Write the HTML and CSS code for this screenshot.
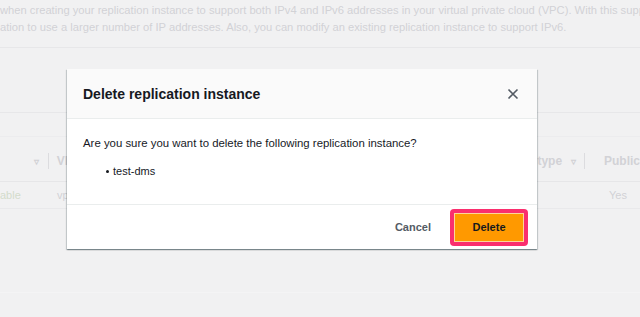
FILE: index.html
```html
<!DOCTYPE html>
<html lang="en">

<head>
  <meta charset="UTF-8">
  <meta name="viewport" content="width=device-width, initial-scale=1.0">
  <title>Delete replication instance</title>
  <link rel="stylesheet" href="styles.css">
</head>

<body>

  <div class="page">
    <div class="intro">
      <p>when creating your replication instance to support both IPv4 and IPv6 addresses in your virtual private cloud (VPC). With this supp</p>
      <p>ation to use a larger number of IP addresses. Also, you can modify an existing replication instance to support IPv6.</p>
    </div>

    <div class="panel-top"></div>
    <div class="panel-bar"></div>

    <div class="table">
      <div class="thead">
        <div class="cell c1"><span class="caret">&#9663;</span><span class="sep"></span></div>
        <div class="cell c2">VPC</div>
        <div class="cell c3">type <span class="caret">&#9663;</span><span class="sep"></span></div>
        <div class="cell c4">Public</div>
      </div>
      <div class="trow">
        <div class="cell c1 status">able</div>
        <div class="cell c2">vpc</div>
        <div class="cell c3"></div>
        <div class="cell c4">Yes</div>
      </div>
    </div>

    <div class="faint-row"></div>
  </div>

  <!-- modal -->
  <div class="modal">
    <div class="modal-head">
      <h2>Delete replication instance</h2>
      <button class="close" aria-label="Close">
        <svg width="12" height="12" viewBox="0 0 12 12">
          <path d="M1.5 1.5 L10.5 10.5 M10.5 1.5 L1.5 10.5" stroke="#545b64" stroke-width="1.6" fill="none" />
        </svg>
      </button>
    </div>
    <div class="modal-body">
      <p>Are you sure you want to delete the following replication instance?</p>
      <ul>
        <li>test-dms</li>
      </ul>
    </div>
    <div class="modal-foot">
      <button class="btn-link">Cancel</button>
      <span class="highlight">
        <button class="btn-primary">Delete</button>
      </span>
    </div>
  </div>

</body>

</html>
```

FILE: styles.css
```css
* {
  padding: 0;
  margin: 0;
  box-sizing: border-box;
}

body {
  margin: 0;
  height: 100vh;
  overflow: hidden;
  background: #f1f1f2;
  font-family: "Liberation Sans", Arial, sans-serif;
}

.page {
  color: #d2d2d6;
}

.intro {
  padding-top: 2px;
  height: 48px;
  border-bottom: 1px solid #e7e7e9;
  font-size: 11.2px;
  line-height: 17px;
  white-space: nowrap;
  overflow: hidden;
}

.panel-top {
  height: 65px;
  border-bottom: 1px solid #e7e7e9;
}

.panel-bar {
  height: 24px;
  border-bottom: 1px solid #ececee;
}

.thead,
.trow {
  display: flex;
  align-items: center;
  font-size: 12px;
}

.thead {
  height: 45px;
  border-bottom: 1px solid #e6e6e8;
  font-weight: bold;
  padding-top: 4px;
}

.trow {
  height: 27px;
  border-bottom: 1px solid #e9e9eb;
  font-size: 11px;
}

.cell {
  display: flex;
  align-items: center;
}

.c1 {
  width: 57px;
  justify-content: flex-end;
  padding-right: 8px;
}

.trow .c1 {
  justify-content: flex-start;
  padding-right: 0;
}

.status {
  color: #d3dccb;
}

.c2 {
  width: 484px;
}

.c3 {
  width: 67px;
}

.c4 {
  flex: 1;
}

.trow .c4 {
  padding-left: 1px;
}

.caret {
  font-size: 10px;
  margin-left: 9px;
  color: #d0d0d4;
}

.c1 .caret {
  margin-right: 9px;
}

.sep {
  display: inline-block;
  width: 1px;
  height: 16px;
  background: #dcdcdf;
  margin-left: 8px;
}

.c1 .sep {
  margin-left: 0;
}

.faint-row {
  height: 84px;
  border-bottom: 1px solid #f4f4f5;
}

/* modal */
.modal {
  position: absolute;
  top: 69px;
  left: 67px;
  width: 470px;
  background: #fff;
  box-shadow: 0 1px 1px 0 rgba(0, 28, 36, 0.3), 1px 1px 1px 0 rgba(0, 28, 36, 0.15), -1px 1px 1px 0 rgba(0, 28, 36, 0.15);
  color: #16191f;
}

.modal-head {
  height: 50px;
  display: flex;
  align-items: center;
  justify-content: space-between;
  padding: 0 18px 0 16px;
  background: #fafafa;
  border-bottom: 1px solid #eaeded;
}

.modal-head h2 {
  font-size: 14px;
  font-weight: bold;
  margin-top: 1px;
}

.close {
  border: 0;
  background: none;
  width: 12px;
  height: 12px;
  display: flex;
  margin-top: 1px;
}

.modal-body {
  height: 85px;
  padding: 16px 16px 0;
  font-size: 11.4px;
  line-height: 16px;
}

.modal-body ul {
  margin-top: 12px;
  padding-left: 30px;
  list-style: none;
  font-size: 11px;
}

.modal-body li {
  position: relative;
}

.modal-body li::before {
  content: '';
  position: absolute;
  left: -7px;
  top: 7px;
  width: 3px;
  height: 3px;
  border-radius: 50%;
  background: #16191f;
}

.modal-foot {
  height: 45px;
  border-top: 1px solid #eaeded;
  display: flex;
  align-items: center;
  justify-content: flex-end;
  padding: 0 9px 0 0;
}

.btn-link {
  border: 0;
  background: none;
  font-family: "Liberation Sans", Arial, sans-serif;
  font-size: 11px;
  font-weight: bold;
  color: #545b64;
  margin-right: 19px;
}

.highlight {
  display: flex;
  padding: 4px;
  background: #fa2e6e;
  border-radius: 4px;
}

.btn-primary {
  width: 70px;
  height: 29px;
  border: 1px solid #fcd49a;
  background: #ff9900;
  font-family: "Liberation Sans", Arial, sans-serif;
  font-size: 11px;
  font-weight: bold;
  color: #16191f;
}
```
